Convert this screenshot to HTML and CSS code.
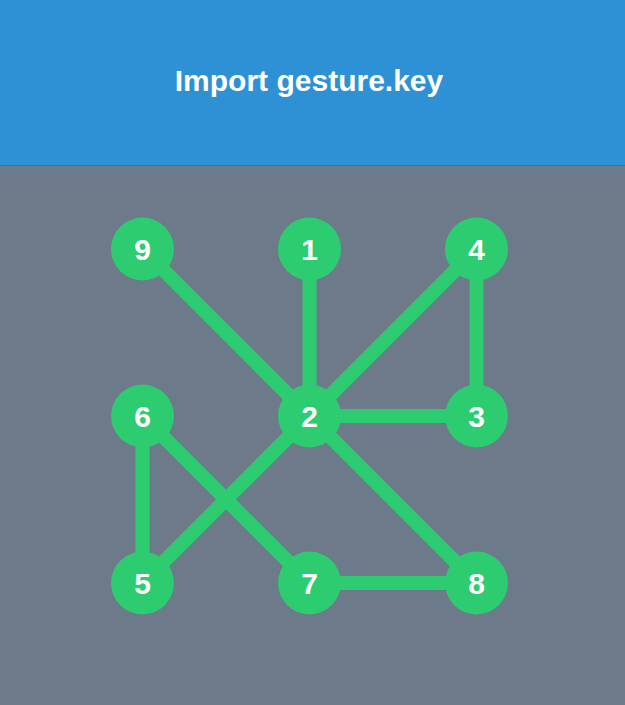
FILE: index.html
```html
<!DOCTYPE html>
<html>
<head>
<meta charset="utf-8">
<link rel="stylesheet" href="styles.css">
</head>
<body>
<header class="header">
  <h1 class="title">Import gesture.key</h1>
</header>
<main class="stage">
  <svg class="pattern" width="625" height="539" viewBox="0 0 625 539">
    <g class="links">
      <line x1="142.5" y1="83" x2="309.5" y2="250"/>
      <line x1="309.5" y1="83" x2="309.5" y2="250"/>
      <line x1="476.5" y1="83" x2="309.5" y2="250"/>
      <line x1="476.5" y1="83" x2="476.5" y2="250"/>
      <line x1="309.5" y1="250" x2="476.5" y2="250"/>
      <line x1="309.5" y1="250" x2="142.5" y2="417"/>
      <line x1="142.5" y1="250" x2="142.5" y2="417"/>
      <line x1="142.5" y1="250" x2="309.5" y2="417"/>
      <line x1="309.5" y1="250" x2="476.5" y2="417"/>
      <line x1="309.5" y1="417" x2="476.5" y2="417"/>
    </g>
    <g class="nodes">
      <circle cx="142.5" cy="83" r="31.5"/>
      <circle cx="309.5" cy="83" r="31.5"/>
      <circle cx="476.5" cy="83" r="31.5"/>
      <circle cx="142.5" cy="250" r="31.5"/>
      <circle cx="309.5" cy="250" r="31.5"/>
      <circle cx="476.5" cy="250" r="31.5"/>
      <circle cx="142.5" cy="417" r="31.5"/>
      <circle cx="309.5" cy="417" r="31.5"/>
      <circle cx="476.5" cy="417" r="31.5"/>
    </g>
    <g class="labels">
      <text x="142.5" y="83">9</text>
      <text x="309.5" y="83">1</text>
      <text x="476.5" y="83">4</text>
      <text x="142.5" y="250">6</text>
      <text x="309.5" y="250">2</text>
      <text x="476.5" y="250">3</text>
      <text x="142.5" y="417">5</text>
      <text x="309.5" y="417">7</text>
      <text x="476.5" y="417">8</text>
    </g>
  </svg>
</main>
</body>
</html>
```
FILE: styles.css
```css
html, body {
  margin: 0;
  padding: 0;
}
body {
  width: 625px;
  height: 705px;
  background: #6c7a89;
  font-family: "Liberation Sans", Arial, sans-serif;
  overflow: hidden;
}
.header {
  height: 165px;
  background: #2f91d5;
  border-bottom: 1px solid #5d6b7a;
  display: flex;
  align-items: center;
  justify-content: center;
  padding-right: 7px;
}
.title {
  margin: 0 0 4px 0;
  color: #ffffff;
  font-size: 30px;
  font-weight: bold;
}
.stage {
  display: block;
}
.pattern {
  display: block;
}
.links line {
  stroke: #2ecc71;
  stroke-width: 14;
}
.nodes circle {
  fill: #2ecc71;
}
.labels text {
  fill: #ffffff;
  font-family: "Liberation Sans", Arial, sans-serif;
  font-weight: bold;
  font-size: 30px;
  text-anchor: middle;
  dominant-baseline: central;
}
```
